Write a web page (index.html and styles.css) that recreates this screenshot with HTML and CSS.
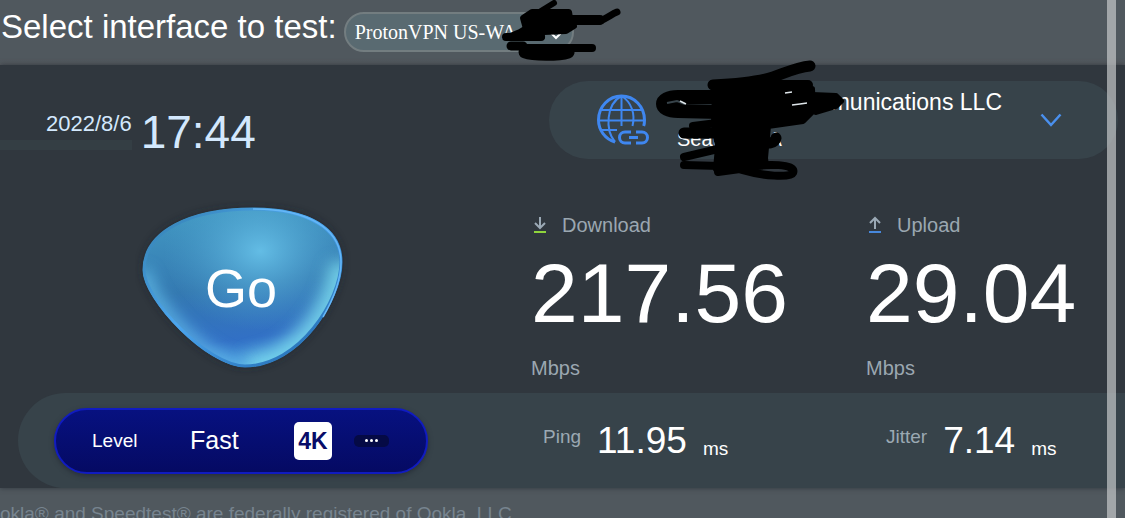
FILE: index.html
```html
<!DOCTYPE html>
<html lang="en">
<head>
<meta charset="utf-8">
<meta name="viewport" content="width=device-width, initial-scale=1">
<title>Speed test</title>
<link rel="stylesheet" href="styles.css">
</head>
<body>
<div class="page">
  <header class="topbar">
    <label class="topbar-label" for="iface">Select interface to test:</label>
    <div class="iface">
      <select class="iface-select" id="iface"><option>ProtonVPN US-WA</option></select>
      <svg class="iface-chevron" viewBox="0 0 12 8" aria-hidden="true"><path d="M1.500 1.500 6 6l4.500-4.500" fill="none" stroke="#fff" stroke-width="2"/></svg>
      <svg class="iface-ink" viewBox="500 0 125 65" aria-hidden="true">
        <g stroke="#000" stroke-linecap="round" stroke-linejoin="round">
          <path d="M523 18l9-6h37l1 6 4 8-8 5-22 1-18-3z" stroke-width="6"/>
          <path d="M508 37l12-5 8-5 14 10z" stroke-width="6"/>
          <g fill="none">
            <path d="M541 11l13-8" stroke-width="6"/>
            <path d="M566 20h34" stroke-width="10"/>
            <path d="M600 21c7-3 12-7 17-9" stroke-width="7"/>
            <path d="M506 37h35" stroke-width="8"/>
            <path d="M511 46h12" stroke-width="9"/>
            <path d="M523 48h69" stroke-width="8"/>
            <path d="M525 52c8 3 34 3 43 0" stroke-width="13"/>
          </g>
        </g>
      </svg>
    </div>
  </header>

  <main class="panel">
    <div class="clock">
      <time class="date">2022/8/6</time>
      <time class="time">17:44</time>
    </div>

    <div class="provider">
      <svg class="globe" viewBox="0 0 52 52" fill="none" stroke="#3f87f0" aria-hidden="true">
        <path d="M18 48C8 45 1.500 36 1.500 26a23 24 0 1 1 46 0c0 2 0 4-.8 6" stroke-width="3"/>
        <path d="M24.500 2v30M4 16h42M2 26.500h46M5 36h15M24.500 2C9 10 8 36 18 48M24.500 2c10 6 14 18 11 30" stroke-width="2"/>
        <path d="M34 38h-6a5.500 5.500 0 0 0 0 11h6M39 38h6a5.500 5.500 0 0 1 0 11h-6M32 43.500h9" stroke-width="3"/>
      </svg>
      <div class="provider-text">
        <span class="provider-name">munications LLC</span>
        <span class="provider-place">Seattle, WA</span>
      </div>
      <button class="provider-toggle" type="button" aria-label="Change provider">
        <svg viewBox="0 0 22 14" aria-hidden="true"><path d="M1.500 1.500 11 12l9.500-10.500" fill="none" stroke="#4a90ee" stroke-width="2.500"/></svg>
      </button>
      <svg class="provider-ink" viewBox="650 55 200 130" aria-hidden="true">
        <g stroke="#000" stroke-linejoin="round" stroke-linecap="round">
          <path d="M715 90l97-1 1 22-10 10-35 5-3 32 1 8-50 3 2-22-4-24z" stroke-width="6"/>
          <path d="M812 95l24 1 5 5-5 5-20 6z" stroke-width="6"/>
          <g fill="none">
            <path d="M713 85c20-1 45-3 60-8 14-5 25-10 37-11" stroke-width="11"/>
            <path d="M713 85h95" stroke-width="10"/>
            <path d="M720 97h-42c-20 0-20 14 0 14l42 1" stroke-width="14"/>
            <path d="M684 133h40M760 140c8 5 15 3 16-2" stroke-width="11"/>
            <path d="M693 126l24-3M684 157l34-8M684 165l36 1M718 172l22-3" stroke-width="8"/>
            <path d="M742 170c20 6 49 8 51 3 4-10-28-9-42-6" stroke-width="8"/>
          </g>
        </g>
        <path d="M667 103l10-2 8 3" fill="none" stroke="#37434a" stroke-width="2"/>
        <path d="M680 101l6 3M792 105l8-1 7-1M785 93l7-1" fill="none" stroke="#dde4e8" stroke-width="1.500"/>
      </svg>
    </div>

    <button class="go" type="button">
      <svg class="go-shape" viewBox="0 0 216 176" aria-hidden="true">
        <defs>
          <linearGradient id="base" x1="0.300" y1="0" x2="0.450" y2="1">
            <stop offset="0" stop-color="#439bc4"/>
            <stop offset="0.500" stop-color="#3479b1"/>
            <stop offset="0.800" stop-color="#3270c5"/>
            <stop offset="1" stop-color="#4b9ee0"/>
          </linearGradient>
          <radialGradient id="shine" cx="0.580" cy="0.290" r="0.450">
            <stop offset="0" stop-color="#68c3ea" stop-opacity="0.900"/>
            <stop offset="1" stop-color="#4ba0cc" stop-opacity="0"/>
          </radialGradient>
          <linearGradient id="rim" x1="0" y1="0" x2="1" y2="1">
            <stop offset="0" stop-color="#347fae"/>
            <stop offset="0.450" stop-color="#4ca6ef"/>
            <stop offset="1" stop-color="#1d63a8"/>
          </linearGradient>
          <clipPath id="inside"><path d="M8 70C8 30 55 8 118 8c57 0 89 20 89 54 0 38-42 105-97 105C72 167 8 100 8 70Z"/></clipPath>
          <filter id="soft" x="-20%" y="-20%" width="140%" height="140%"><feGaussianBlur stdDeviation="8"/></filter>
          <filter id="shade" x="-20%" y="-20%" width="140%" height="140%"><feGaussianBlur stdDeviation="4"/></filter>
        </defs>
        <path d="M8 70C8 30 55 8 118 8c57 0 89 20 89 54 0 38-42 105-97 105C72 167 8 100 8 70Z" fill="#1c242b" opacity="0.700" filter="url(#shade)"/>
        <g clip-path="url(#inside)">
          <path d="M0 0h216v176H0z" fill="url(#base)"/>
          <path d="M0 0h216v176H0z" fill="url(#shine)"/>
          <path d="M207 62c0 38-42 105-97 105" fill="none" stroke="#7bdcee" stroke-width="26" opacity="0.850" filter="url(#soft)"/>
          <path d="M110 167C72 167 8 100 8 70" fill="none" stroke="#68c4ef" stroke-width="14" opacity="0.800" filter="url(#soft)"/>
        </g>
        <path d="M9 70C9 31 56 9 118 9c56 0 88 20 88 53 0 38-42 104-96 104C73 166 9 99 9 70Z" fill="none" stroke="url(#rim)" stroke-width="3"/>
        <path d="M118 9c56 0 88 20 88 53 0 16-7 36-18 55" fill="none" stroke="#66b7f7" stroke-width="1.500"/>
      </svg>
      <span class="go-text">Go</span>
    </button>

    <section class="metric metric-down">
      <h2 class="metric-title">
        <svg class="metric-icon" viewBox="0 0 14 18" fill="none" aria-hidden="true"><path d="M7 1v11M2 7l5 5 5-5" stroke="#9ba9b5" stroke-width="2"/><path d="M1 16h12" stroke="#8fd43c" stroke-width="2"/></svg>
        Download
      </h2>
      <div class="metric-value">217.56</div>
      <div class="metric-unit">Mbps</div>
    </section>
    <section class="metric">
      <h2 class="metric-title">
        <svg class="metric-icon" viewBox="0 0 14 18" fill="none" aria-hidden="true"><path d="M7 13V2M2 7l5-5 5 5" stroke="#9ba9b5" stroke-width="2"/><path d="M1 16h12" stroke="#4788dc" stroke-width="2"/></svg>
        Upload
      </h2>
      <div class="metric-value">29.04</div>
      <div class="metric-unit">Mbps</div>
    </section>

    <div class="summary">
      <div class="level">
        <span class="level-label">Level</span>
        <span class="level-value">Fast</span>
        <span class="badge">4K</span>
        <button class="more" type="button" aria-label="More"><i class="dot"></i><i class="dot"></i><i class="dot"></i></button>
      </div>
      <div class="stat stat-ping"><span class="stat-label">Ping</span><span class="stat-value">11.95</span><span class="stat-unit">ms</span></div>
      <div class="stat stat-jitter"><span class="stat-label">Jitter</span><span class="stat-value">7.14</span><span class="stat-unit">ms</span></div>
    </div>
  </main>

  <footer class="footer">okla® and Speedtest® are federally registered of Ookla, LLC</footer>
  <div class="scrollbar"></div>
</div>
</body>
</html>
```

FILE: styles.css
```css
* { box-sizing: border-box; }

body {
  margin: 0;
  background: #50585e;
  color: #fff;
  font-family: "Liberation Sans", Arial, sans-serif;
}

button { border: 0; padding: 0; background: none; color: inherit; font: inherit; cursor: pointer; }

.page {
  position: relative;
  display: flex;
  flex-direction: column;
  height: 100vh;
  overflow: hidden;
}

.topbar {
  flex: none;
  display: flex;
  align-items: flex-start;
  gap: 7px;
  height: 65px;
  padding: 8px 0 0 1px;
  background: linear-gradient(#50585e 90%, #555a5f);
}
.topbar-label { font-size: 33px; line-height: 38px; white-space: nowrap; }

.iface { position: relative; margin-top: 4px; }
.iface-select {
  appearance: none;
  display: block;
  width: 230px;
  height: 40px;
  padding: 0 32px 0 9px;
  border: 2px solid #737d80;
  border-radius: 20px;
  background: #596a71;
  color: #fff;
  font: 20px "Liberation Serif", "Times New Roman", serif;
}
.iface-chevron { position: absolute; right: 12px; top: 20px; width: 12px; height: 8px; }
.iface-ink { position: absolute; left: 156px; top: -12px; width: 125px; height: 65px; pointer-events: none; z-index: 2; }

.panel {
  flex: none;
  display: grid;
  grid-template-columns: 531fr 335fr 259fr;
  grid-template-rows: 135px 193px 95px;
  background: #30373e;
  box-shadow: 0 0 5px #30373e;
  z-index: 1;
}

.clock {
  align-self: start;
  display: flex;
  align-items: flex-start;
  gap: 9px;
  margin-top: 40px;
  padding-left: 46px;
  color: #d3e8fd;
  background: linear-gradient(#343e44, #343e44) 0 35px / 132px 10px no-repeat;
}
.date { margin-top: 6px; font-size: 22px; line-height: 26px; }
.time { font-size: 46px; line-height: 54px; }

.provider {
  position: relative;
  grid-column: 2 / 4;
  display: flex;
  align-items: center;
  height: 78px;
  margin: 16px 7px 0 18px;
  padding: 0 56px 0 48px;
  border-radius: 39px;
  background: #37434a;
}
.globe { flex: none; width: 52px; height: 52px; }
.provider-text {
  flex: 1;
  display: flex;
  flex-direction: column;
  gap: 12px;
  padding: 0 38px 0 28px;
}
.provider-name { align-self: flex-end; font-size: 23px; line-height: 26px; }
.provider-place { font-size: 20px; line-height: 24px; }
.provider-toggle svg { display: block; width: 22px; height: 14px; }
.provider-ink { position: absolute; left: 101px; top: -26px; width: 200px; height: 130px; pointer-events: none; }

.go {
  display: grid;
  place-items: center;
  align-self: start;
  justify-self: start;
  margin-left: 135px;
}
.go-shape { grid-area: 1 / 1; width: 216px; height: 176px; }
.go-text { grid-area: 1 / 1; padding-right: 4px; font-size: 54px; line-height: 64px; z-index: 1; }

.metric { padding-top: 12px; }
.metric-title {
  display: flex;
  align-items: center;
  gap: 15px;
  margin: 0;
  padding-left: 2px;
  color: #9ba7b1;
  font-size: 20px;
  font-weight: 400;
  line-height: 26px;
}
.metric-icon { width: 14px; height: 18px; }
.metric-value { margin-top: 6px; font-size: 84px; line-height: 98px; }
.metric-unit { margin-top: 14px; color: #9ba7b1; font-size: 20px; line-height: 24px; }

.summary {
  grid-column: 1 / -1;
  display: grid;
  grid-template-columns: 525fr 343fr 239fr;
  align-items: center;
  margin-left: 18px;
  border-radius: 48px 0 0 48px;
  background: #37434a;
}
.level {
  justify-self: start;
  display: flex;
  align-items: center;
  width: 374px;
  height: 66px;
  margin-left: 36px;
  padding-left: 36px;
  border: 2px solid #101bc0;
  border-radius: 33px;
  background: linear-gradient(#071180, #050a63);
  box-shadow: 0 2px 5px #283039;
}
.level-label { width: 98px; font-size: 19px; }
.level-value { width: 104px; font-size: 25px; }
.badge {
  width: 38px;
  border-radius: 5px;
  background: #fff;
  color: #080c68;
  font-size: 23px;
  font-weight: 700;
  line-height: 38px;
  text-align: center;
}
.more {
  display: flex;
  align-items: center;
  justify-content: center;
  gap: 2px;
  width: 35px;
  height: 12px;
  margin-left: 22px;
  border-radius: 5px;
  background: #050a45;
}
.dot { width: 3px; height: 3px; border-radius: 50%; background: #fff; }

.stat { display: flex; align-items: center; }
.stat-label { padding-bottom: 8px; color: #9ba9b3; font-size: 19px; }
.stat-value { margin: 0 16px; font-size: 37px; line-height: 44px; }
.stat-unit { padding-top: 16px; font-size: 19px; }

.footer {
  flex: none;
  padding-top: 14px;
  color: #77848f;
  font-size: 19px;
  line-height: 24px;
  white-space: nowrap;
}

.scrollbar {
  position: absolute;
  top: 0;
  right: 9px;
  bottom: 0;
  width: 9px;
  background: rgba(196, 199, 201, 0.7);
  z-index: 3;
}
```
